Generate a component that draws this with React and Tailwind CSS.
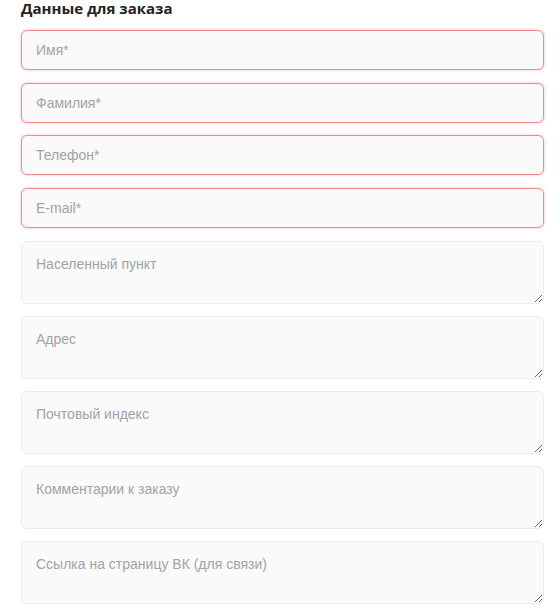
import React from "react";

const inputs = ["Имя*", "Фамилия*", "Телефон*", "E-mail*"];
const areas = [
  "Населенный пункт",
  "Адрес",
  "Почтовый индекс",
  "Комментарии к заказу",
  "Ссылка на страницу ВК (для связи)",
];

export default function App() {
  return (
    <div className="min-h-screen bg-white pl-[21px] pr-[15px] font-['Liberation_Sans',Arial,sans-serif]">
      <h2 className="h-[30px] font-['Open_Sans',sans-serif] text-[15px] font-bold leading-[16px] text-[#222]">
        Данные для заказа
      </h2>
      <div className="flex flex-col gap-[12.5px]">
        {inputs.map((p) => (
          <input
            key={p}
            placeholder={p}
            className="h-[40px] w-full rounded-[6px] border border-[#f58a8a] bg-[#fafafa] px-[14px] text-[14px] text-[#333] placeholder:text-[#a3a3a3] shadow-[0_0_3px_rgba(245,100,100,0.45)] outline-none"
          />
        ))}
      </div>
      <div className="mt-[13px] flex flex-col gap-[12px]">
        {areas.map((p) => (
          <textarea
            key={p}
            placeholder={p}
            className="block h-[63px] w-full rounded-[6px] border border-[#ececec] bg-[#fafafa] px-[14px] pt-[14px] text-[14px] leading-[16px] text-[#333] placeholder:text-[#a3a3a3] outline-none"
          />
        ))}
      </div>
    </div>
  );
}
